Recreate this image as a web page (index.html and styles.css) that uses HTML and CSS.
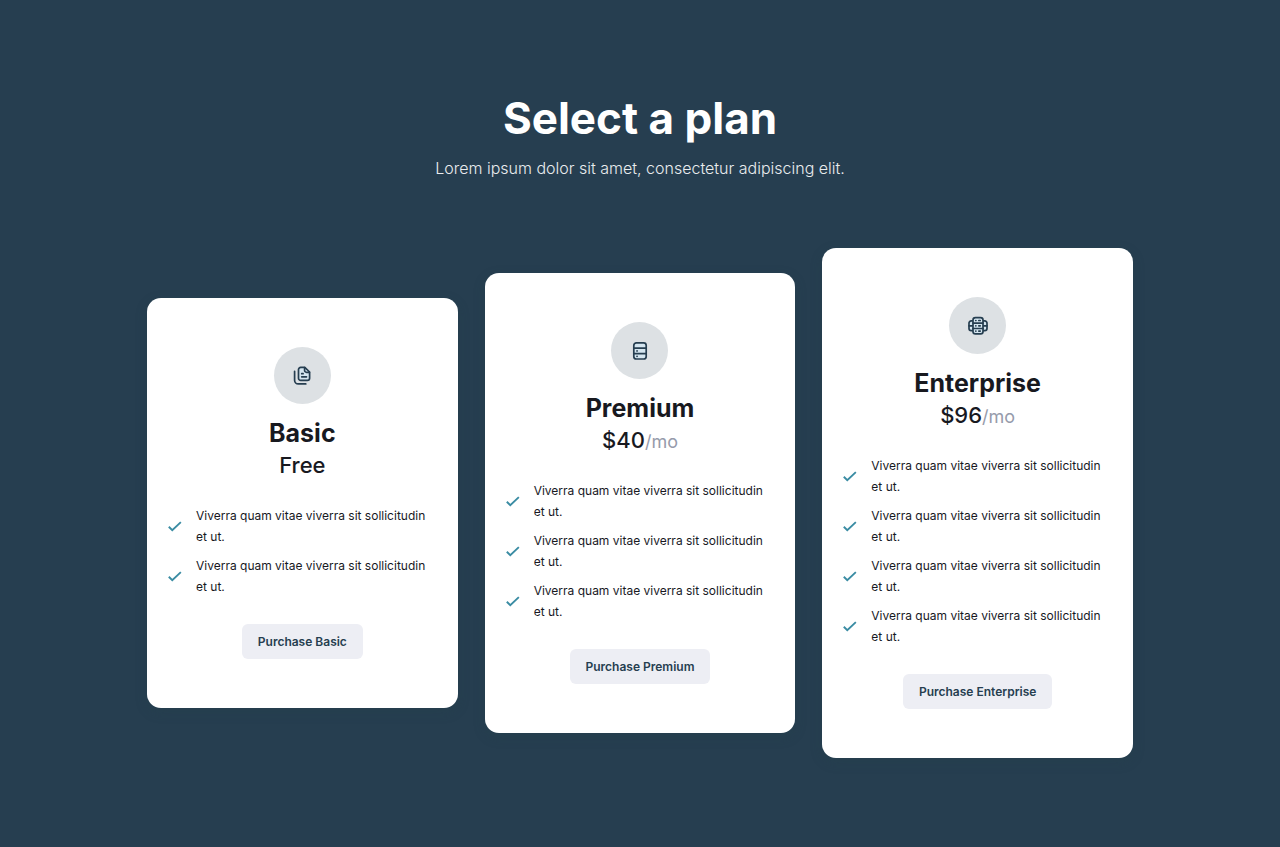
FILE: index.html
```html
<!DOCTYPE html>
<html lang="en">
<head>
<meta charset="utf-8">
<meta name="viewport" content="width=device-width, initial-scale=1">
<title>Select a plan</title>
<link rel="stylesheet" href="styles.css">
</head>
<body>
<svg class="defs" aria-hidden="true">
  <symbol id="check" viewBox="0 0 18 18"><path d="M3.600 9.200l3.300 3.300L15 4.900"/></symbol>
</svg>
<main class="pricing">
  <header class="intro">
    <h1 class="intro-title">Select a plan</h1>
    <p class="intro-text">Lorem ipsum dolor sit amet, consectetur adipiscing elit.</p>
  </header>
  <div class="plans">
    <section class="plan">
      <span class="plan-icon">
        <svg viewBox="0 0 20 20" aria-hidden="true">
          <path class="tint" d="M8.700 1.400h4.100l4.800 4.600v6.200a2.200 2.200 0 0 1-2.200 2.200H8.700A2.200 2.200 0 0 1 6.500 12.200V3.600A2.200 2.200 0 0 1 8.700 1.400z"/>
          <path d="M12.600 1.600v2.800a1.900 1.900 0 0 0 1.900 1.900h2.900M9.700 7.700h1.400M9.700 10.800h4.800M2.600 5.300v8.900A3.700 3.700 0 0 0 6.300 17.900h7.500"/>
        </svg>
      </span>
      <h2 class="plan-name">Basic</h2>
      <p class="plan-price">Free</p>
      <ul class="features">
        <li><svg class="check" aria-hidden="true"><use href="#check"/></svg>Viverra quam vitae viverra sit sollicitudin et ut.</li>
        <li><svg class="check" aria-hidden="true"><use href="#check"/></svg>Viverra quam vitae viverra sit sollicitudin et ut.</li>
      </ul>
      <button class="purchase" type="button">Purchase Basic</button>
    </section>
    <section class="plan">
      <span class="plan-icon">
        <svg viewBox="0 0 20 20" aria-hidden="true">
          <rect class="tint" x="3.800" y="1.800" width="12.400" height="16.200" rx="2.600"/>
          <path d="M4 7.200h12.200M4 12.600h12.200M7 9.900h.1M7 15.300h.1"/>
        </svg>
      </span>
      <h2 class="plan-name">Premium</h2>
      <p class="plan-price">$40<span class="period">/mo</span></p>
      <ul class="features">
        <li><svg class="check" aria-hidden="true"><use href="#check"/></svg>Viverra quam vitae viverra sit sollicitudin et ut.</li>
        <li><svg class="check" aria-hidden="true"><use href="#check"/></svg>Viverra quam vitae viverra sit sollicitudin et ut.</li>
        <li><svg class="check" aria-hidden="true"><use href="#check"/></svg>Viverra quam vitae viverra sit sollicitudin et ut.</li>
      </ul>
      <button class="purchase" type="button">Purchase Premium</button>
    </section>
    <section class="plan">
      <span class="plan-icon">
        <svg viewBox="0 0 20 20" aria-hidden="true">
          <path class="tint" d="M5 4.900H3.200A2.200 2.200 0 0 0 1 7.100v5.400A2.200 2.200 0 0 0 3.200 14.700H5M15 4.900h1.800A2.200 2.200 0 0 1 19 7.100v5.400a2.200 2.200 0 0 1-2.200 2.200H15"/>
          <path d="M1 9.800h4M15 9.800h4"/>
          <rect class="tint" x="5" y="1.700" width="10" height="16.200" rx="2.400"/>
          <path d="M5 7.100h10M5 12.500h10M7.800 4.500h.1M10.800 4.500h1.400M7.800 9.800h.1M10.800 9.800h1.400M7.800 15.100h.1M10.800 15.100h1.400"/>
        </svg>
      </span>
      <h2 class="plan-name">Enterprise</h2>
      <p class="plan-price">$96<span class="period">/mo</span></p>
      <ul class="features">
        <li><svg class="check" aria-hidden="true"><use href="#check"/></svg>Viverra quam vitae viverra sit sollicitudin et ut.</li>
        <li><svg class="check" aria-hidden="true"><use href="#check"/></svg>Viverra quam vitae viverra sit sollicitudin et ut.</li>
        <li><svg class="check" aria-hidden="true"><use href="#check"/></svg>Viverra quam vitae viverra sit sollicitudin et ut.</li>
        <li><svg class="check" aria-hidden="true"><use href="#check"/></svg>Viverra quam vitae viverra sit sollicitudin et ut.</li>
      </ul>
      <button class="purchase" type="button">Purchase Enterprise</button>
    </section>
  </div>
</main>
</body>
</html>
```
FILE: styles.css
```css
* {
  box-sizing: border-box;
}

body {
  margin: 0;
  min-height: 100vh;
  background: #263e50;
  color: #18191f;
  font-family: Inter, "Open Sans", sans-serif;
}

h1, h2, p, ul {
  margin: 0;
  padding: 0;
}

.defs {
  display: none;
}

.pricing {
  max-width: 1034px;
  margin: 0 auto;
  padding: 88px 24px;
}

.intro {
  color: #fff;
  text-align: center;
}

.intro-title {
  font-size: 44px;
  font-weight: 700;
  line-height: 60px;
}

.intro-text {
  margin-top: 6px;
  color: #e9ecee;
  font-size: 16px;
  font-weight: 300;
  line-height: 28px;
}

.plans {
  display: grid;
  grid-template-columns: repeat(3, 1fr);
  align-items: center;
  gap: 27px;
  margin-top: 66px;
}

.plan {
  display: flex;
  flex-direction: column;
  align-items: center;
  padding: 49px 18px;
  border-radius: 14px;
  background: #fff;
  box-shadow: 0 4px 12px rgba(36, 66, 72, 0.3);
}

.plan-icon {
  display: flex;
  align-items: center;
  justify-content: center;
  width: 57px;
  height: 57px;
  border-radius: 50%;
  background: #dde1e4;
}

.plan-icon svg {
  width: 20px;
  height: 20px;
  fill: none;
  stroke: #263e50;
  stroke-width: 1.7;
  stroke-linecap: round;
  stroke-linejoin: round;
}

.plan-icon .tint {
  fill: #d5e6f0;
}

.plan-name {
  margin-top: 11px;
  font-size: 25px;
  font-weight: 700;
  line-height: 36px;
}

.plan-price {
  font-size: 22px;
  font-weight: 500;
  line-height: 28px;
}

.period {
  color: #969bab;
  font-size: 18px;
  font-weight: 400;
  line-height: 18px;
}

.features {
  display: grid;
  gap: 8px;
  width: 100%;
  margin: 26px 0 27px;
  padding-right: 8px;
  list-style: none;
}

.features li {
  display: flex;
  align-items: center;
  gap: 12px;
  font-size: 12px;
  line-height: 21px;
}

.check {
  flex: none;
  width: 19px;
  height: 19px;
  fill: none;
  stroke: #3a8ca3;
  stroke-width: 1.8;
}

.purchase {
  height: 35px;
  padding: 0 16px;
  border: 0;
  border-radius: 6px;
  background: #edeef4;
  color: #263e50;
  font: 600 12px/20px Inter, "Open Sans", sans-serif;
  cursor: pointer;
}

@media (max-width: 800px) {
  .plans {
    grid-template-columns: 1fr;
  }
}
```
